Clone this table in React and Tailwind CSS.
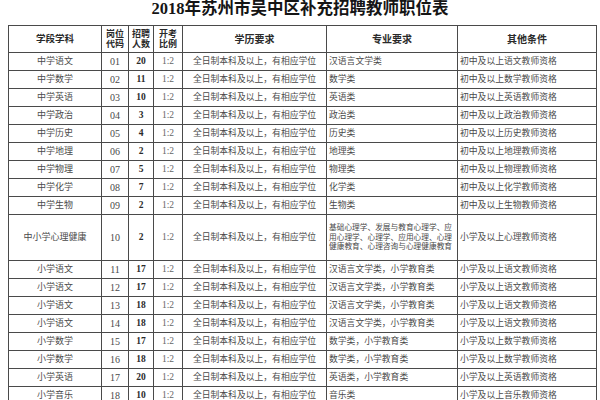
const rows = [
  ['中学语文', '01', '20', '汉语言文学类', '初中及以上语文教师资格'],
  ['中学数学', '02', '11', '数学类', '初中及以上数学教师资格'],
  ['中学英语', '03', '10', '英语类', '初中及以上英语教师资格'],
  ['中学政治', '04', '3', '政治类', '初中及以上政治教师资格'],
  ['中学历史', '05', '4', '历史类', '初中及以上历史教师资格'],
  ['中学地理', '06', '2', '地理类', '初中及以上地理教师资格'],
  ['中学物理', '07', '5', '物理类', '初中及以上物理教师资格'],
  ['中学化学', '08', '7', '化学类', '初中及以上化学教师资格'],
  ['中学生物', '09', '2', '生物类', '初中及以上生物教师资格'],
  ['中小学心理健康', '10', '2', null, '小学及以上心理教师资格'],
  ['小学语文', '11', '17', '汉语言文学类，小学教育类', '小学及以上语文教师资格'],
  ['小学语文', '12', '17', '汉语言文学类，小学教育类', '小学及以上语文教师资格'],
  ['小学语文', '13', '18', '汉语言文学类，小学教育类', '小学及以上语文教师资格'],
  ['小学语文', '14', '18', '汉语言文学类，小学教育类', '小学及以上语文教师资格'],
  ['小学数学', '15', '17', '数学类，小学教育类', '小学及以上数学教师资格'],
  ['小学数学', '16', '18', '数学类，小学教育类', '小学及以上数学教师资格'],
  ['小学英语', '17', '20', '英语类，小学教育类', '小学及以上英语教师资格'],
  ['小学音乐', '18', '10', '音乐类', '小学及以上音乐教师资格'],
];

const cell = 'border-r border-b border-[#4a4a4a] flex items-center';
const head = 'h-[27px] font-bold text-[#2a2a2a]';

const App = () => {
  return (
    <div className="w-[600px] h-[400px] overflow-hidden bg-white font-['Liberation_Serif','Noto_Sans_CJK_SC',serif] text-[#4a4a4a]">
      <div className="h-[25px] text-center text-[16.5px] leading-[17px] font-bold text-[#151515]">
        2018年苏州市吴中区补充招聘教师职位表
      </div>

      <div className="ml-[8px] w-max grid grid-cols-[93px_27px_25px_29px_144px_131px_139px] border-l border-t border-[#4a4a4a]">
        {/* header */}
        <div className={`${cell} ${head} justify-center text-[9.5px]`}>学段学科</div>
        <div className={`${cell} ${head} flex-col justify-center text-[9px] leading-[10px]`}>
          <span>岗位</span>
          <span>代码</span>
        </div>
        <div className={`${cell} ${head} flex-col justify-center text-[9px] leading-[10px]`}>
          <span>招聘</span>
          <span>人数</span>
        </div>
        <div className={`${cell} ${head} flex-col justify-center text-[9px] leading-[10px]`}>
          <span>开考</span>
          <span>比例</span>
        </div>
        <div className={`${cell} ${head} justify-center text-[10px]`}>学历要求</div>
        <div className={`${cell} ${head} justify-center text-[10px]`}>专业要求</div>
        <div className={`${cell} ${head} justify-center text-[10px]`}>其他条件</div>

        {rows.map((r) => {
          const h = r[3] === null ? 'h-[46px]' : 'h-[18px]';
          return [
            <div key={r[1] + 'a'} className={`${cell} ${h} justify-center text-[9px]`}>{r[0]}</div>,
            <div key={r[1] + 'b'} className={`${cell} ${h} justify-center text-[10px]`}>{r[1]}</div>,
            <div key={r[1] + 'c'} className={`${cell} ${h} justify-center text-[9.5px] font-bold text-[#2a2a2a]`}>{r[2]}</div>,
            <div key={r[1] + 'd'} className={`${cell} ${h} justify-center text-[9.5px] text-[#666]`}>1:2</div>,
            <div key={r[1] + 'e'} className={`${cell} ${h} justify-center text-[8.8px]`}>全日制本科及以上，有相应学位</div>,
            r[3] === null ? (
              <div key={r[1] + 'f'} className={`${cell} ${h} pl-[2px] text-[7.7px] leading-[9.5px]`}>
                <div>
                  基础心理学、发展与教育心理学、应
                  <br />
                  用心理学、心理学、应用心理、心理
                  <br />
                  健康教育、心理咨询与心理健康教育
                </div>
              </div>
            ) : (
              <div key={r[1] + 'f'} className={`${cell} ${h} pl-[2px] text-[8.8px]`}>{r[3]}</div>
            ),
            <div key={r[1] + 'g'} className={`${cell} ${h} pl-[2px] text-[8.8px]`}>{r[4]}</div>,
          ];
        })}
      </div>
    </div>
  );
};

export default App;
